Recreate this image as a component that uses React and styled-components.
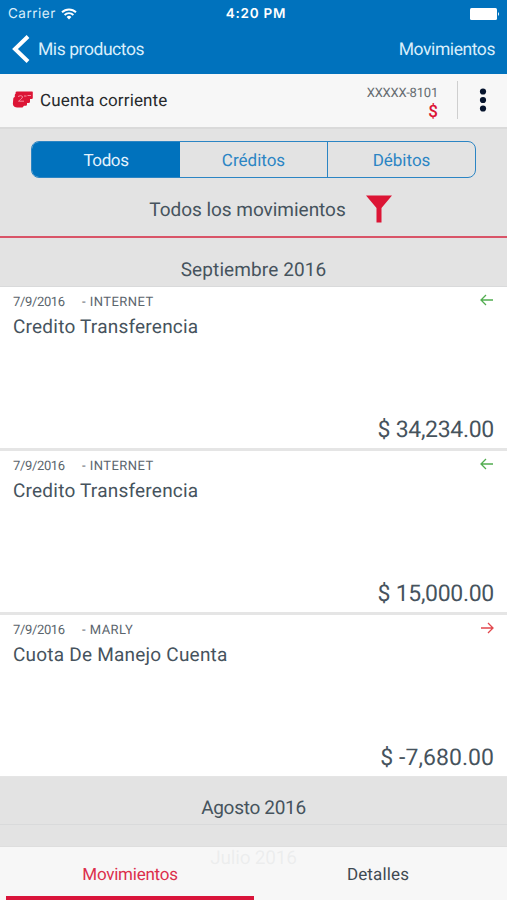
import styled, { createGlobalStyle } from "styled-components";

const movements = [
  { id: 1, date: "7/9/2016", place: "INTERNET", title: "Credito Transferencia", amount: "$ 34,234.00", credit: true },
  { id: 2, date: "7/9/2016", place: "INTERNET", title: "Credito Transferencia", amount: "$ 15,000.00", credit: true },
  { id: 3, date: "7/9/2016", place: "MARLY", title: "Cuota De Manejo Cuenta", amount: "$ -7,680.00", credit: false },
];

const Arrow = ({ credit }) => (
  <ArrowSvg viewBox="0 0 14 12" $credit={credit}>
    {credit ? <path d="M13 6H1.5M6 1L1 6l5 5" /> : <path d="M1 6h11.5M8 1l5 5-5 5" />}
  </ArrowSvg>
);

const App = () => {
  return (
    <Screen>
      <GlobalStyle />
      <Header>
        <StatusBar>
          <Carrier>
            <span>Carrier</span>
            <svg width="16" height="12" viewBox="0 0 16 12" fill="none" stroke="#fff" strokeWidth="1.9">
              <path d="M1 4.3a10 10 0 0 1 14 0M3.6 7a6.2 6.2 0 0 1 8.8 0" />
              <path d="M5.6 9a3.4 3.4 0 0 1 4.8 0L8 11.6z" fill="#fff" stroke="none" />
            </svg>
          </Carrier>
          <Clock>4:20 PM</Clock>
          <svg width="30" height="12" viewBox="0 0 30 12" fill="#fff">
            <rect width="27" height="12" rx="1.5" />
            <path d="M28 4q2 2 0 4z" />
          </svg>
        </StatusBar>
        <NavBar>
          <Back>
            <svg width="18" height="28" viewBox="0 0 18 28" fill="none" stroke="#fff" strokeWidth="4">
              <path d="M16 1.5L3 14l13 12.5" />
            </svg>
            <NavText>Mis productos</NavText>
          </Back>
          <NavText>Movimientos</NavText>
        </NavBar>
      </Header>

      <AccountBar>
        <svg width="21" height="19" viewBox="0 0 21 19">
          <path
            d="M5 1.500h15.200q.6 0 .6.600V8q0 1-1.300 1H18v2.700q0 1.300-1.300 1.300H15v1.600q0 1.200-1.200 1.200H12l-1.500 1.700H5q-2.500-.2-3.600-1.700Q.5 14.500 1 12l.3-3.500q.2-1.300 1.500-1.500V5q0-1 .8-1.200V2.500q0-1 1.400-1z"
            fill="#dc1535"
          />
          <path d="M6 6.500q3-1.500 4.300-.3T6.500 11.200H12M12 6h2.500M15.500 5.500H19" fill="none" stroke="#f58d9f" strokeWidth="1" />
        </svg>
        <AccountName>Cuenta corriente</AccountName>
        <AccountInfo>
          <AccountNumber>XXXXX-8101</AccountNumber>
          <Currency>$</Currency>
        </AccountInfo>
        <MenuButton>
          <svg width="8" height="26" viewBox="0 0 8 26" fill="#06142d">
            <circle cx="4" cy="4.500" r="3.100" />
            <circle cx="4" cy="13" r="3.100" />
            <circle cx="4" cy="21.500" r="3.100" />
          </svg>
        </MenuButton>
      </AccountBar>

      <Filters>
        <Segments>
          <Segment $active $spacing={-0.4}>Todos</Segment>
          <Segment $spacing={0}>Créditos</Segment>
          <Segment $spacing={0}>Débitos</Segment>
        </Segments>
        <FilterLine>
          <FilterText>Todos los movimientos</FilterText>
          <svg width="26" height="28" viewBox="0 0 26 28" fill="#dc1535">
            <path d="M0 .5h26L15.500 13v14.500h-5V13z" />
          </svg>
        </FilterLine>
      </Filters>

      <Month $first $spacing={0.1}>Septiembre 2016</Month>
      <List>
        {movements.map((m) => (
          <Row key={m.id}>
            <RowTop>
              <Meta>
                <When>{m.date}</When>
                <Place>- {m.place}</Place>
              </Meta>
              <Arrow credit={m.credit} />
            </RowTop>
            <RowTitle>{m.title}</RowTitle>
            <Amount $spacing={m.credit ? -0.3 : 0.05}>{m.amount}</Amount>
          </Row>
        ))}
      </List>
      <Month $spacing={-0.3}>Agosto 2016</Month>
      <Month $spacing={-0.2}>Julio 2016</Month>
      <Month $spacing={-0.2}>Junio 2016</Month>

      <TabBar>
        <Tab $active>Movimientos</Tab>
        <Tab>Detalles</Tab>
      </TabBar>
    </Screen>
  );
};

export default App;

const GlobalStyle = createGlobalStyle`
  * {
    box-sizing: border-box;
  }
  body {
    margin: 0;
    overflow: hidden;
    font-family: Roboto, "Liberation Sans", sans-serif;
    text-rendering: geometricPrecision;
  }
  svg {
    display: block;
    flex: none;
  }
`;

const Screen = styled.div`
  width: 507px;
  height: 900px;
  position: relative;
  overflow: hidden;
  display: flex;
  flex-direction: column;
  background: #e3e3e3;
  color: #46535d;
  white-space: nowrap;
`;

const Header = styled.header`
  height: 74px;
  flex: none;
  background: #0072bd;
  color: #fff;
`;

const StatusBar = styled.div`
  height: 27px;
  padding: 0 7px 0 8px;
  display: grid;
  grid-template-columns: 1fr auto 1fr;
  align-items: center;
  font-family: Inter, sans-serif;
  font-size: 13.5px;
  > :last-child {
    justify-self: end;
  }
`;

const Carrier = styled.div`
  display: flex;
  align-items: center;
  gap: 5px;
  color: #d9eefb;
  letter-spacing: 0.5px;
`;

const Clock = styled.div`
  padding: 1px 0 0 4px;
  font-weight: 600;
  letter-spacing: 0.75px;
`;

const NavBar = styled.div`
  height: 43px;
  padding: 0 12px;
  display: flex;
  align-items: center;
  justify-content: space-between;
  font-size: 17.5px;
  letter-spacing: -0.43px;
  color: #d9eefb;
`;

const NavText = styled.span`
  padding-top: 2px;
`;

const Back = styled.div`
  display: flex;
  align-items: center;
  gap: 8px;
`;

const AccountBar = styled.div`
  height: 55px;
  flex: none;
  padding: 0 0 2px 12px;
  display: flex;
  align-items: center;
  background: #f7f7f7;
  border-bottom: 2px solid #dadada;
`;

const AccountName = styled.div`
  margin-left: 7px;
  padding-top: 2px;
  flex: 1;
  font-size: 17px;
  letter-spacing: 0.15px;
  color: #26292c;
`;

const AccountInfo = styled.div`
  display: flex;
  flex-direction: column;
  align-items: flex-end;
  padding: 6px 19px 0 0;
  line-height: 18px;
`;

const AccountNumber = styled.div`
  font-size: 13px;
  letter-spacing: -0.2px;
  color: #666c71;
`;

const Currency = styled.div`
  font-size: 17px;
  font-weight: 500;
  color: #dc1535;
`;

const MenuButton = styled.div`
  width: 50px;
  height: 38px;
  display: flex;
  align-items: center;
  justify-content: center;
  border-left: 1px solid #cfcfcf;
`;

const Filters = styled.div`
  height: 109px;
  flex: none;
  padding: 12px 31px 0;
  border-bottom: 2px solid #d95468;
`;

const Segments = styled.div`
  height: 37px;
  display: grid;
  grid-template-columns: 148px 147px 1fr;
  border: 1.500px solid #2b85c4;
  border-radius: 8px;
  overflow: hidden;
`;

const Segment = styled.div`
  display: flex;
  align-items: center;
  justify-content: center;
  padding-top: 2px;
  font-size: 17px;
  letter-spacing: ${({ $spacing }) => $spacing}px;
  color: ${({ $active }) => ($active ? "#e4f3fd" : "#2b85c4")};
  background: ${({ $active }) => ($active ? "#0072bd" : "transparent")};
  & + & + & {
    border-left: 1px solid #2b85c4;
  }
`;

const FilterLine = styled.div`
  height: 61px;
  display: flex;
  align-items: center;
  justify-content: center;
  gap: 20px;
  padding-left: 34px;
  font-size: 19px;
  letter-spacing: -0.03px;
`;

const FilterText = styled.span`
  padding-top: 2px;
`;

const Month = styled.div`
  height: ${({ $first }) => ($first ? 49 : 50)}px;
  flex: none;
  padding-top: ${({ $first }) => ($first ? 21 : 22)}px;
  text-align: center;
  font-size: 19px;
  line-height: 22px;
  letter-spacing: ${({ $spacing }) => $spacing}px;
  border-bottom: 1px solid #d9dadb;
`;

const List = styled.div`
  flex: none;
  display: grid;
  grid-template-rows: 161px 161px 161px;
  gap: 3px;
  padding-bottom: 1px;
  margin-bottom: -2px;
  background: #e5e5e5;
`;

const Row = styled.div`
  padding: 6px 13px 4px;
  display: flex;
  flex-direction: column;
  background: #fff;
`;

const RowTop = styled.div`
  height: 18px;
  display: flex;
  justify-content: space-between;
`;

const Meta = styled.div`
  display: flex;
  padding-top: 1px;
  font-size: 13px;
  line-height: 18px;
  color: #5b656d;
`;

const When = styled.span`
  width: 69px;
  letter-spacing: -0.35px;
`;

const Place = styled.span`
  letter-spacing: 0.45px;
`;

const ArrowSvg = styled.svg`
  width: 14px;
  height: 12px;
  margin-top: 1px;
  fill: none;
  stroke: ${({ $credit }) => ($credit ? "#52ad50" : "#e2474d")};
  stroke-width: 1.3;
`;

const RowTitle = styled.div`
  margin-top: 5px;
  font-size: 19px;
  line-height: 22px;
  letter-spacing: 0.22px;
`;

const Amount = styled.div`
  margin-top: auto;
  text-align: right;
  font-size: 23px;
  line-height: 28px;
  letter-spacing: ${({ $spacing }) => $spacing}px;
`;

const TabBar = styled.nav`
  position: absolute;
  left: 0;
  right: 0;
  bottom: 0;
  height: 54px;
  padding: 0 5px 0 6px;
  display: grid;
  grid-template-columns: 248px 1fr;
  background: rgba(249, 249, 249, 0.93);
  border-top: 1px solid #dedede;
`;

const Tab = styled.div`
  display: flex;
  align-items: center;
  justify-content: center;
  padding-top: ${({ $active }) => ($active ? 6 : 3)}px;
  font-size: 17px;
  letter-spacing: ${({ $active }) => ($active ? -0.25 : 0.15)}px;
  color: ${({ $active }) => ($active ? "#dc2f4c" : "#3f4a52")};
  border-bottom: ${({ $active }) => ($active ? "4px solid #d9143a" : "none")};
`;
